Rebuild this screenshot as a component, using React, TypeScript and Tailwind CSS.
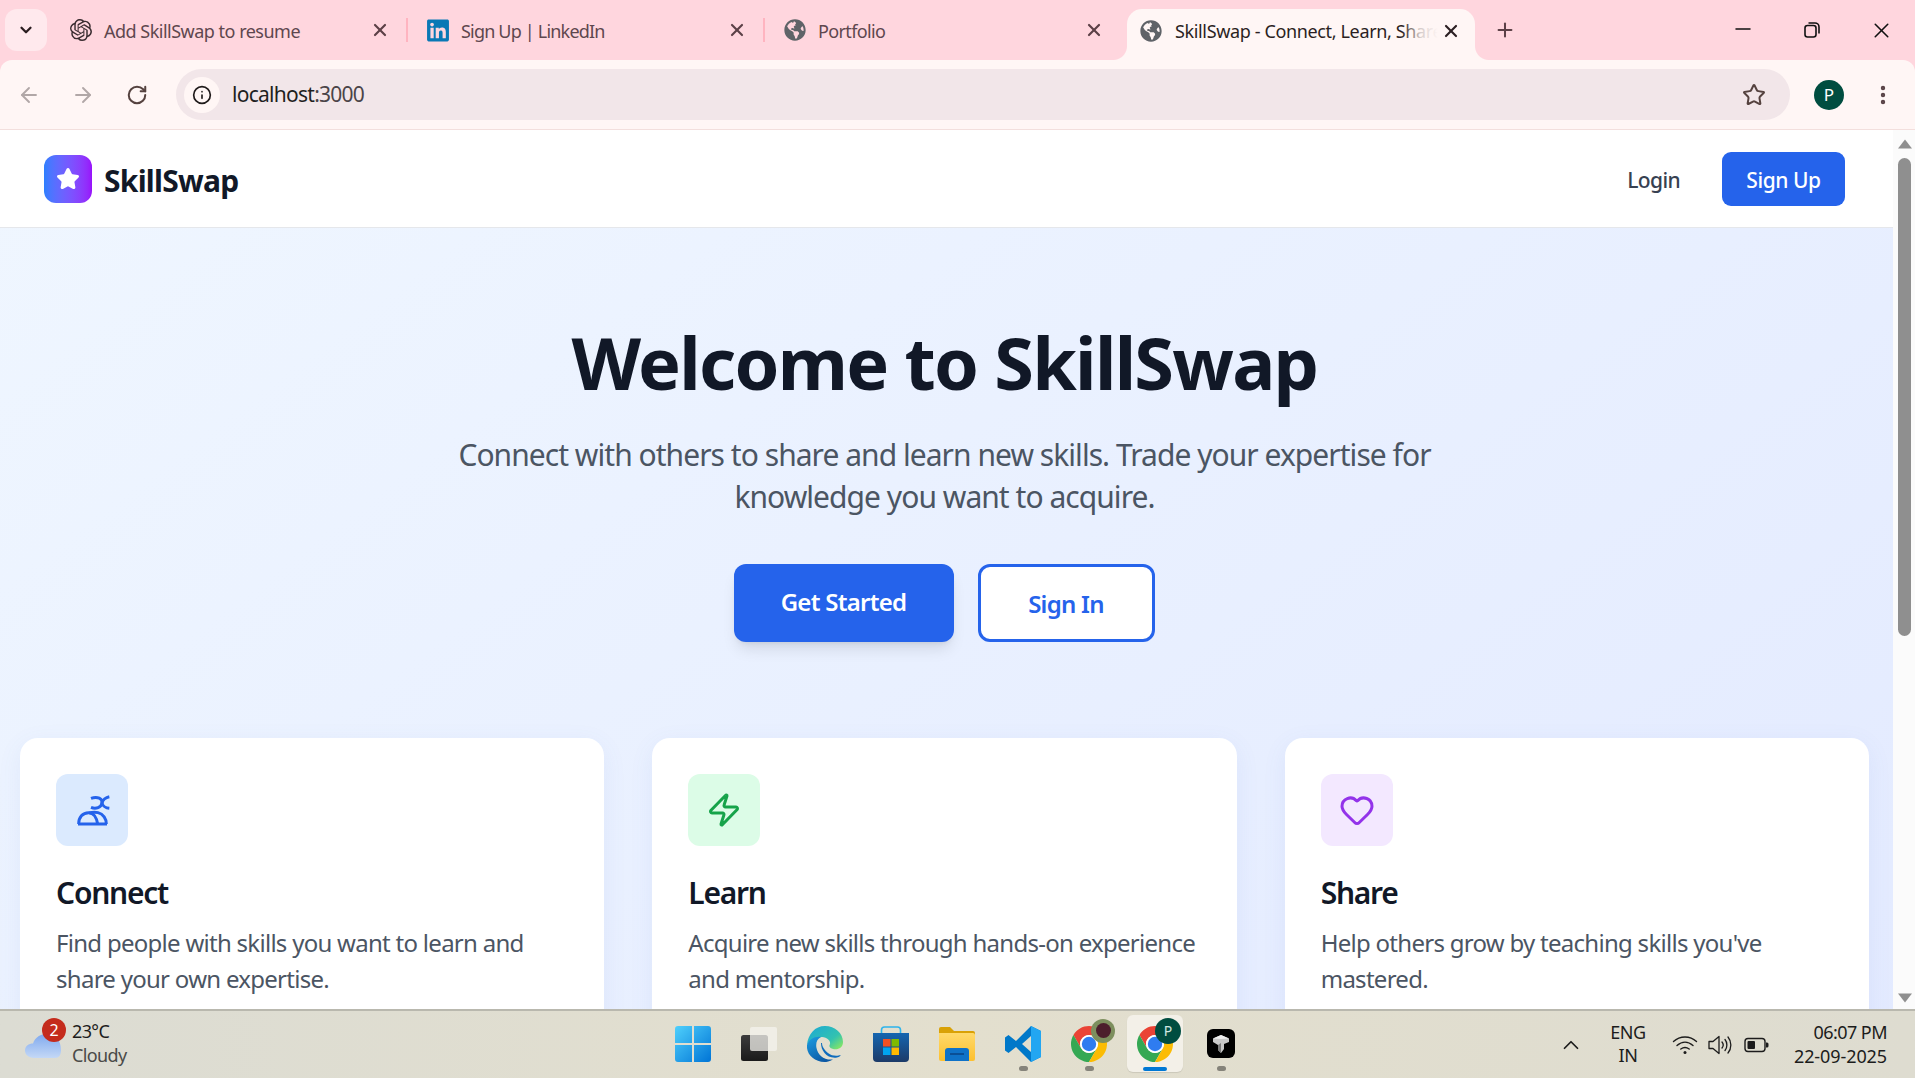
import { ArrowLeft, ArrowRight, RotateCw, Info, Star, MoreVertical, X, Plus, Minus, ChevronDown, ChevronUp, Zap, Heart } from "lucide-react";
import { SiOpenai } from "react-icons/si";
import { FaLinkedin, FaGlobeAmericas } from "react-icons/fa";

function Tab({ icon, title, last, track = "tracking-[-0.035em]" }: { icon: React.ReactNode; title: string; last?: boolean; track?: string }) {
  return (
    <div className="relative flex w-[357px] items-center pl-[18px] pr-[18px]">
      <span className="flex h-[24px] w-[24px] shrink-0 items-center justify-center">{icon}</span>
      <span className={`ml-[11px] flex-1 whitespace-nowrap pt-[3px] text-[18px] ${track} text-[#5e474e]`}>{title}</span>
      <X size={20} strokeWidth={2.6} className="text-[#5c4047]" />
      {!last && <span className="absolute right-0 top-[18px] h-[24px] w-[2px] bg-[#ffb4c0]" />}
    </div>
  );
}

function TabStrip() {
  return (
    <div className="flex h-[60px] shrink-0 bg-[#ffd6de]">
      <div className="ml-[5px] mt-[9px] flex h-[42px] w-[42px] items-center justify-center rounded-[12px] bg-[#ffe9ed]">
        <ChevronDown size={18} strokeWidth={3} className="text-[#2a1d20]" />
      </div>
      <div className="ml-[4px] flex h-[60px]">
        <Tab icon={<SiOpenai size={22} className="text-[#3a2c30]" />} title="Add SkillSwap to resume" track="tracking-[-0.028em]" />
        <Tab icon={<FaLinkedin size={25} className="text-[#0a78b5]" />} title="Sign Up | LinkedIn" track="tracking-[-0.045em]" />
        <Tab icon={<FaGlobeAmericas size={22} className="text-[#5f6368]" />} title="Portfolio" last />
      </div>
      <div className="relative ml-[5px] mt-[9px] flex h-[51px] w-[348px] items-center rounded-t-[15px] bg-[#fff6f5] pb-[7px] pl-[13px] pr-[14px]">
        <span className="absolute -left-[14px] bottom-0 h-[14px] w-[14px] bg-[radial-gradient(circle_at_0_0,#ffd6de_13.5px,#fff6f5_14.5px)]" />
        <span className="absolute -right-[14px] bottom-0 h-[14px] w-[14px] bg-[radial-gradient(circle_at_100%_0,#ffd6de_13.5px,#fff6f5_14.5px)]" />
        <FaGlobeAmericas size={22} className="shrink-0 text-[#5f6368]" />
        <div className="relative ml-[13px] flex-1 overflow-hidden whitespace-nowrap text-[18px] tracking-[-0.02em] text-[#2b1f22]">
          SkillSwap - Connect, Learn, Share
          <span className="absolute right-0 top-0 h-full w-[36px] bg-linear-to-r from-transparent via-[#fff6f5cc] to-[#fff6f5]" />
        </div>
        <X size={20} strokeWidth={2.6} className="ml-[3px] shrink-0 text-[#2b1f22]" />
      </div>
      <div className="ml-[14px] mt-[10px] flex h-[40px] w-[32px] items-center justify-center">
        <Plus size={22} strokeWidth={2.2} className="text-[#5c4047]" />
      </div>
      <div className="ml-auto flex h-[60px]">
        <div className="flex w-[69px] items-center justify-center pb-[2px] pl-[1px]"><Minus size={24} strokeWidth={1.5} className="text-[#111]" /></div>
        <div className="flex w-[69px] items-center justify-center">
          <svg width="16" height="16" viewBox="0 0 16 16" fill="none" stroke="#111" strokeWidth="1.6"><rect x="1" y="3.5" width="11" height="11.5" rx="2.5" /><path d="M4.5 1h6.5a4 4 0 0 1 4 4v6.5" /></svg>
        </div>
        <div className="flex w-[69px] items-center justify-center pl-[1px]"><X size={25} strokeWidth={1.5} className="text-[#111]" /></div>
      </div>
    </div>
  );
}

function Toolbar() {
  return (
    <div className="relative flex h-[70px] shrink-0 rounded-t-[12px] border-b-[1px] border-[#f3dfdd] bg-[#fff6f5] pt-[9px]">
      <div className="flex h-[51px] w-[176px] items-center">
        <span className="flex w-[58px] justify-center"><ArrowLeft size={24} strokeWidth={1.9} className="text-[#b1a7a7]" /></span>
        <span className="flex w-[50px] justify-center"><ArrowRight size={24} strokeWidth={1.9} className="text-[#b1a7a7]" /></span>
        <span className="flex w-[58px] justify-center"><RotateCw size={22} strokeWidth={2.2} className="text-[#55423f]" /></span>
      </div>
      <div className="flex h-[51px] w-[1614px] items-center rounded-full bg-[#f2e6e9] pl-[8px] pr-[24px]">
        <span className="flex h-[36px] w-[36px] items-center justify-center rounded-full bg-[#fff6f5]"><Info size={20} strokeWidth={2} className="text-[#1f1a1a]" /></span>
        <span className="ml-[12px] flex-1 text-[21px] tracking-[-0.035em] text-[#1f1f1f]">localhost<span className="text-[#4b4448]">:3000</span></span>
        <Star size={24} strokeWidth={2} className="text-[#55423f]" />
      </div>
      <div className="ml-[24px] flex h-[51px] w-[30px] items-center">
        <span className="flex h-[30px] w-[30px] items-center justify-center rounded-full bg-[#004d40] text-[17px] text-white">P</span>
      </div>
      <div className="ml-[27px] flex h-[51px] w-[24px] items-center justify-center">
        <MoreVertical size={24} strokeWidth={2.4} className="text-[#5a4347]" />
      </div>
    </div>
  );
}

function Card({ box, icon, title, lines }: { box: string; icon: React.ReactNode; title: string; lines: string[] }) {
  return (
    <div className="h-[500px] rounded-[18px] bg-white p-[36px] shadow-[0_6px_24px_rgba(90,110,200,0.08)]">
      <div className={`flex h-[72px] w-[72px] items-center justify-center rounded-[12px] ${box}`}>{icon}</div>
      <h3 className="mt-[26px] text-[30px] font-semibold leading-[42px] tracking-[-0.042em] text-[#111827]">{title}</h3>
      <p className="mt-[11px] text-[24px] leading-[36px] tracking-[-0.03em] text-[#4b5563]">
        {lines.map((l) => <span key={l} className="block whitespace-nowrap">{l}</span>)}
      </p>
    </div>
  );
}

function ConnectIcon() {
  return (
    <svg width="72" height="72" viewBox="0 0 216 216" fill="none" stroke="#2563eb" strokeWidth="9">
      <path d="M105 73C125 66 140 74 138 87C136 100 120 106 105 100" />
      <path d="M160 68C150 70 140 78 138 87C140 95 150 102 160 103" />
      <path d="M66 150H153" />
      <path d="M68 150C68 130 80 116 98 116C112 116 122 130 125 150" />
      <path d="M100 117C110 114 118 114 126 116C142 120 151 135 151 150" />
    </svg>
  );
}

function Page() {
  return (
    <div className="flex min-h-0 flex-1">
      <main className="min-w-0 flex-1 overflow-hidden bg-white">
        <header className="flex h-[98px] items-center border-b border-[#e5e7eb] pl-[44px] pr-[48px]">
          <div className="flex h-[48px] w-[48px] items-center justify-center rounded-[12px] bg-linear-to-r from-blue-500 to-purple-600">
            <Star size={24} fill="white" stroke="white" strokeWidth={2} />
          </div>
          <span className="ml-[12px] pt-[3px] text-[30px] font-bold tracking-[-0.025em] text-[#111827]">SkillSwap</span>
          <span className="ml-auto pt-[5px] text-[21px] font-medium tracking-[-0.03em] text-[#374151]">Login</span>
          <button className="ml-[42px] flex h-[54px] w-[123px] items-center justify-center rounded-[9px] bg-[#2563eb] pt-[5px] text-[21px] font-medium tracking-[-0.02em] text-white">Sign Up</button>
        </header>
        <div className="h-[1428px] bg-linear-to-br from-blue-50 to-indigo-100 pb-[48px] pl-[20px] pr-[24px] pt-[98px]">
          <h1 className="text-center text-[72px] font-bold leading-[72px] tracking-[-0.024em] text-[#111827]">Welcome to SkillSwap</h1>
          <p className="mt-[36px] text-center text-[30px] leading-[42px] tracking-[-0.032em] text-[#4b5563]">
            <span className="block">Connect with others to share and learn new skills. Trade your expertise for</span>
            <span className="block">knowledge you want to acquire.</span>
          </p>
          <div className="mt-[46px] flex justify-center gap-[24px] pr-[1px]">
            <button className="flex h-[78px] w-[220px] items-center justify-center rounded-[12px] bg-[#2563eb] pb-[3px] text-[24px] font-semibold tracking-[-0.03em] text-white shadow-[0_10px_15px_-3px_rgba(0,0,0,0.1),0_4px_6px_-4px_rgba(0,0,0,0.1)]">Get Started</button>
            <button className="flex h-[78px] w-[177px] items-center justify-center rounded-[12px] border-[3px] border-[#2563eb] bg-white pt-[2px] text-[24px] font-semibold tracking-[-0.03em] text-[#2563eb]">Sign In</button>
          </div>
          <div className="mt-[96px] grid grid-cols-3 gap-[48px]">
            <Card box="bg-[#dbeafe]" icon={<ConnectIcon />} title="Connect" lines={["Find people with skills you want to learn and", "share your own expertise."]} />
            <Card box="bg-[#dcfce7]" icon={<Zap size={36} strokeWidth={2} className="text-[#16a34a]" />} title="Learn" lines={["Acquire new skills through hands-on experience", "and mentorship."]} />
            <Card box="bg-[#f3e8ff]" icon={<Heart size={36} strokeWidth={2} className="text-[#9333ea]" />} title="Share" lines={["Help others grow by teaching skills you've", "mastered."]} />
          </div>
        </div>
      </main>
      <div className="flex w-[22px] shrink-0 flex-col items-center bg-[#fbfbfb] pt-[9px] pb-[6px] pl-[1px]">
        <svg width="14" height="10" viewBox="0 0 14 10"><path d="M7 0.5 L14 9.5 H0Z" fill="#8f8f8f" strokeLinejoin="round" /></svg>
        <div className="mt-[9px] h-[478px] w-[13px] rounded-full bg-[#8f8f8f]" />
        <div className="flex-1" />
        <svg width="14" height="10" viewBox="0 0 14 10"><path d="M7 9.5 L14 0.5 H0Z" fill="#8f8f8f" /></svg>
      </div>
    </div>
  );
}

function Chrome({ badge }: { badge: React.ReactNode }) {
  return (
    <div className="relative h-[36px] w-[36px]">
      <svg width="36" height="36" viewBox="4 4 40 40">
        <path d="M41.32 14H24A10 10 0 0 0 15.34 29L6.68 14A20 20 0 0 1 41.32 14Z" fill="#ea4335" />
        <path d="M6.68 14L15.34 29A10 10 0 0 0 32.66 29L24 44A20 20 0 0 1 6.68 14Z" fill="#34a853" />
        <path d="M24 44L32.66 29A10 10 0 0 0 24 14H41.32A20 20 0 0 1 24 44Z" fill="#fbbc04" />
        <circle cx="24" cy="24" r="10" fill="#fff" />
        <circle cx="24" cy="24" r="8" fill="#2f7cf0" />
      </svg>
      {badge}
    </div>
  );
}

function Slot({ children, dot, active }: { children: React.ReactNode; dot?: boolean; active?: boolean }) {
  return (
    <div className="relative flex h-[57px] w-[66px] items-center justify-center">
      {active && <span className="absolute left-[5px] top-0 h-[57px] w-[56px] rounded-[6px] bg-[#f3f0e8] shadow-[0_1px_1px_rgba(0,0,0,0.1)]" />}
      <span className="relative">{children}</span>
      {dot && <span className="absolute bottom-[1px] left-[29px] h-[5px] w-[9px] rounded-full bg-[#85837a]" />}
      {active && <span className="absolute bottom-[1px] left-[21px] h-[4px] w-[24px] rounded-full bg-[#0078d4]" />}
    </div>
  );
}

function Taskbar() {
  return (
    <div className="flex h-[69px] shrink-0 items-center border-t-[2px] border-[#b9b8ae] bg-linear-to-r from-[#dcdcd3] via-[#e3dfce] to-[#dedcd0] text-[#1c1c1c]">
      <div className="flex w-[660px] shrink-0 items-center pl-[25px]">
        <div className="relative h-[44px] w-[47px] shrink-0">
          <svg className="absolute bottom-[8px] left-0" width="37" height="26" viewBox="0 0 37 26">
            <defs><linearGradient id="cl" x1="0" y1="0" x2="0" y2="1"><stop offset="0" stopColor="#7fa9ee" /><stop offset="1" stopColor="#c4d8f6" /></linearGradient></defs>
            <path d="M9 25C3 25 0 21 0 17.5C0 13 4 10.5 8 10.5C10 4 16 1 22 1C30 1 36 7 36 17C36 22 34 25 30 25Z" fill="url(#cl)" />
          </svg>
          <span className="absolute left-[17px] -top-[5px] flex h-[24px] w-[24px] items-center justify-center rounded-full bg-[#c42b1c] text-[16px] text-white">2</span>
        </div>
        <div className="pb-[4px] text-[18px] leading-[24px] tracking-[-0.035em]">
          <div>23°C</div>
          <div className="text-[#4a4a48]">Cloudy</div>
        </div>
      </div>
      <div className="flex items-center pb-[2px]">
        <Slot>
          <svg width="36" height="36" viewBox="0 0 36 36">
            <defs><linearGradient id="w" x1="0" y1="0" x2="1" y2="1"><stop offset="0" stopColor="#4fd0fc" /><stop offset="1" stopColor="#0074d6" /></linearGradient></defs>
            <path d="M3 0H17V17H0V3A3 3 0 0 1 3 0ZM19 0H33A3 3 0 0 1 36 3V17H19ZM0 19H17V36H3A3 3 0 0 1 0 33ZM19 19H36V33A3 3 0 0 1 33 36H19Z" fill="url(#w)" />
          </svg>
        </Slot>
        <Slot>
          <svg width="36" height="36" viewBox="0 0 36 36">
            <defs><linearGradient id="tv" x1="0" y1="0" x2="0" y2="1"><stop offset="0" stopColor="#3c3c3c" /><stop offset="1" stopColor="#1a1a1a" /></linearGradient></defs>
            <rect x="0" y="9" width="27" height="26" rx="2.5" fill="url(#tv)" />
            <rect x="9" y="1" width="27" height="24" rx="2" fill="#f4f3ee" fillOpacity="0.75" />
          </svg>
        </Slot>
        <Slot>
          <svg width="36" height="36" viewBox="0 0 36 36">
            <defs>
              <linearGradient id="e1" x1="0" y1="0" x2="1" y2="0.8"><stop offset="0" stopColor="#1aa8d6" /><stop offset="0.7" stopColor="#33c2b0" /><stop offset="1" stopColor="#7ee36a" /></linearGradient>
              <linearGradient id="e2" x1="0" y1="0" x2="0.6" y2="1"><stop offset="0" stopColor="#1b9de2" /><stop offset="1" stopColor="#0c59a4" /></linearGradient>
            </defs>
            <path d="M18 0C28 0 36 7 36 16C36 22 31 24 26 23C23 22 21.5 20.5 23 18C24 15 20 11 15 11C8 11 2 15 0 19C1 8 8 0 18 0Z" fill="url(#e1)" />
            <path d="M0 19C2 13 8 10 14 11C10 13 8.5 17 9.5 22C10.8 29 17 34.5 26 33.5C22.5 35.5 19.5 36 17.5 36C7 36 -1 28 0 19Z" fill="url(#e2)" />
            <path d="M14 17C14 25 20 33 30 31.5C32.5 31 34 29.5 33.5 29C31 30 25 30.5 21 27C18 24.5 15 21 15 17Z" fill="#0f6cbd" />
          </svg>
        </Slot>
        <Slot>
          <svg width="36" height="36" viewBox="0 0 36 36">
            <defs><linearGradient id="st" x1="0" y1="0" x2="0" y2="1"><stop offset="0" stopColor="#1566b0" /><stop offset="1" stopColor="#1c3a68" /></linearGradient></defs>
            <path d="M8.5 8V4A3 3 0 0 1 11.5 1H24.5A3 3 0 0 1 27.5 4V8" fill="none" stroke="#2eb4ec" strokeWidth="1.6" />
            <path d="M0 7H36V32A4 4 0 0 1 32 36H4A4 4 0 0 1 0 32Z" fill="url(#st)" />
            <rect x="10" y="13" width="7.5" height="7.5" fill="#f25022" />
            <rect x="18.5" y="13" width="7.5" height="7.5" fill="#7fba00" />
            <rect x="10" y="21.5" width="7.5" height="7.5" fill="#00a4ef" />
            <rect x="18.5" y="21.5" width="7.5" height="7.5" fill="#ffb900" />
          </svg>
        </Slot>
        <Slot>
          <svg width="36" height="34" viewBox="0 0 36 34">
            <defs><linearGradient id="fo" x1="0" y1="0" x2="0" y2="1"><stop offset="0" stopColor="#ffd96b" /><stop offset="1" stopColor="#fdc02f" /></linearGradient></defs>
            <path d="M0 2A2 2 0 0 1 2 0H11L15 4H34A2 2 0 0 1 36 6V10H0Z" fill="#d9a106" />
            <path d="M0 6H34A2 2 0 0 1 36 8V32A2 2 0 0 1 34 34H2A2 2 0 0 1 0 32Z" fill="url(#fo)" />
            <path d="M6 34V24A3 3 0 0 1 9 21H27A3 3 0 0 1 30 24V34Z" fill="#0f72c8" />
            <rect x="11" y="26" width="14" height="2" fill="#0a4f96" />
          </svg>
        </Slot>
        <Slot dot>
          <svg width="36" height="36" viewBox="0 0 36 36">
            <path d="M26 0L36 5V31L26 36L11 21L3.5 27L0 24.5V11.500L3.500 9L11 15ZM26 10L17 18L26 26Z" fill="#0078c9" />
            <path d="M26 0L36 5V31L26 36Z" fill="#22a6f2" />
          </svg>
        </Slot>
        <Slot dot>
          <Chrome badge={
            <span className="absolute -right-[8px] -top-[7px] flex h-[24px] w-[24px] items-center justify-center rounded-full bg-[#7d8f5e]">
              <span className="h-[15px] w-[15px] rounded-full bg-[#4c1f2c]" />
            </span>
          } />
        </Slot>
        <Slot active>
          <Chrome badge={
            <span className="absolute -right-[8px] -top-[8px] flex h-[26px] w-[26px] items-center justify-center rounded-full bg-[#004d40] text-[14px] text-[#cfe8e2]">P</span>
          } />
        </Slot>
        <Slot dot>
          <span className="flex h-[29px] w-[28px] items-center justify-center rounded-[6px] bg-black">
            <svg width="18" height="20" viewBox="0 0 18 20">
              <path d="M9 1L17 4.500V8L12 10V15L9 19L6 16V11L1 8V4.500Z" fill="#c9c9c9" />
              <path d="M9 5L1 4.500L9 1L17 4.500Z" fill="#efefef" />
              <path d="M9 9V19L6 16V11Z" fill="#7a7a7a" />
            </svg>
          </span>
        </Slot>
      </div>
      <div className="relative flex flex-1 items-center">
        <ChevronUp size={26} strokeWidth={1.6} className="ml-[304px] shrink-0" />
        <div className="ml-[7px] w-[74px] shrink-0 pb-[2px] text-center text-[18px] leading-[23px] tracking-[-0.02em]">
          <div>ENG</div>
          <div>IN</div>
        </div>
        <svg className="ml-[7px] shrink-0" width="26" height="22" viewBox="0 0 26 22" fill="none" stroke="#1c1c1c" strokeWidth="1.4" strokeLinecap="round">
          <path d="M1.500 7.500C8 1.500 18 1.500 24.500 7.500" /><path d="M5 11.500C10 7 16 7 21 11.500" /><path d="M8.800 15C11.500 13 14.500 13 17.200 15" />
          <circle cx="13" cy="18.500" r="1.500" fill="#1c1c1c" stroke="none" />
        </svg>
        <svg className="ml-[10px] shrink-0" width="25" height="22" viewBox="0 0 25 22" fill="none" stroke="#1c1c1c" strokeWidth="1.3" strokeLinejoin="round" strokeLinecap="round">
          <path d="M1 7.500H5L11 2.500V19.500L5 14.500H1Z" /><path d="M14 8C15.500 9.800 15.500 12.200 14 14" /><path d="M17 5.500C19.500 8.500 19.500 13.500 17 16.500" /><path d="M20 3C23.800 7.500 23.800 14.500 20 19" />
        </svg>
        <svg className="ml-[11px] shrink-0" width="25" height="16" viewBox="0 0 25 16" fill="none">
          <rect x="1" y="1.500" width="20" height="13" rx="3" stroke="#1c1c1c" strokeWidth="1.4" />
          <rect x="3.500" y="4" width="7.500" height="8" rx="1" fill="#1c1c1c" />
          <path d="M22 5.500H23A1.500 1.500 0 0 1 24.500 7V9A1.500 1.500 0 0 1 23 10.500H22Z" fill="#1c1c1c" />
        </svg>
        <div className="absolute right-[28px] top-1/2 -translate-y-1/2 whitespace-nowrap pb-[2px] text-right text-[18px] leading-[24px] tracking-[-0.005em]">
          <div className="tracking-[-0.03em]">06:07 PM</div>
          <div>22-09-2025</div>
        </div>
      </div>
    </div>
  );
}

export default function App() {
  return (
    <div className="flex h-screen w-full flex-col overflow-hidden bg-[#ffd6de] font-['Noto_Sans',sans-serif]">
      <TabStrip />
      <Toolbar />
      <Page />
      <Taskbar />
    </div>
  );
}
